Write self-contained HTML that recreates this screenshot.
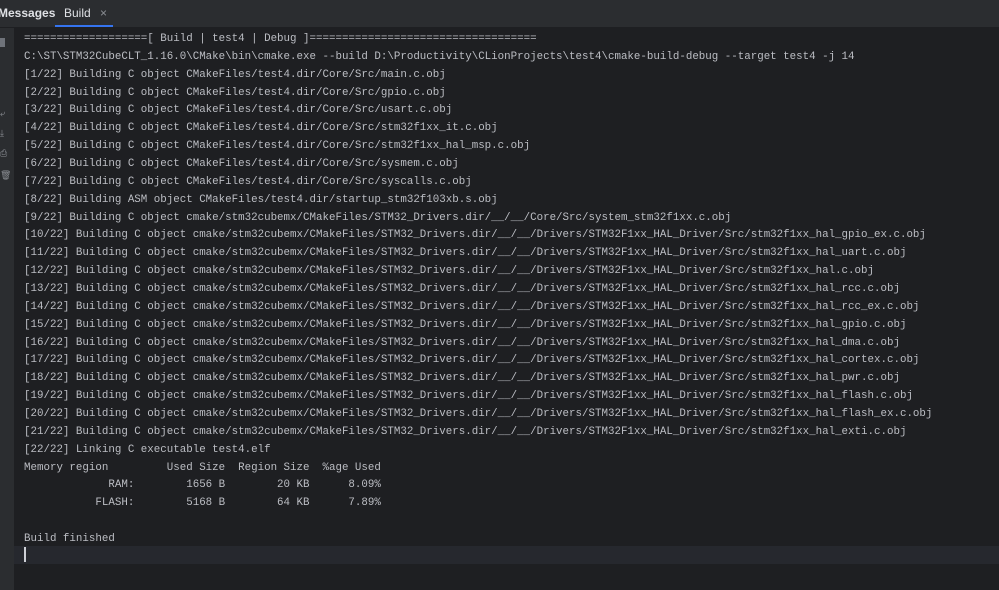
<!DOCTYPE html>
<html><head><meta charset="utf-8"><style>
body{margin:0;width:999px;height:590px;background:#1e1f22;overflow:hidden;font-family:"Liberation Sans",sans-serif;position:relative}
.hdr{position:absolute;left:0;top:0;width:999px;height:27px;background:#2b2d30;border-bottom:1px solid #1e1f22}
.tab{position:absolute;top:6px;font-size:12px;color:#dfe1e5}
.ul{position:absolute;left:55px;top:25px;width:58px;height:2px;background:#3574f0}
.gut{position:absolute;left:0;top:28px;width:14px;height:562px;background:#2b2d30}
.ico{position:absolute;left:0;width:6px;color:#8c8f95;font-size:9px;line-height:10px}
pre{position:absolute;left:24px;top:31px;margin:0;font-family:"Liberation Mono",monospace;font-size:10.82px;line-height:17.86px;color:#bcbec4}
.cur{position:absolute;left:14px;top:546px;width:985px;height:18px;background:#26282e}
.caret{position:absolute;left:24px;top:547px;width:2px;height:15px;background:#ced0d6}
</style></head><body>
<div class="hdr"></div>
<div class="tab" style="left:-2px;font-weight:bold">Messages</div>
<div class="tab" style="left:64px">Build <span style="color:#8c8f95;margin-left:6px">×</span></div>
<div class="ul"></div>
<div class="gut"></div>
<div class="ico" style="top:38px;width:5px;height:9px;background:#6f737a"></div>
<div class="ico" style="top:108px">⤶</div>
<div class="ico" style="top:128px">⤓</div>
<div class="ico" style="top:148px">⎙</div>
<div class="ico" style="top:170px">🗑</div>
<div class="cur"></div>
<div class="caret"></div>
<pre>===================[ Build | test4 | Debug ]===================================
C:\ST\STM32CubeCLT_1.16.0\CMake\bin\cmake.exe --build D:\Productivity\CLionProjects\test4\cmake-build-debug --target test4 -j 14
[1/22] Building C object CMakeFiles/test4.dir/Core/Src/main.c.obj
[2/22] Building C object CMakeFiles/test4.dir/Core/Src/gpio.c.obj
[3/22] Building C object CMakeFiles/test4.dir/Core/Src/usart.c.obj
[4/22] Building C object CMakeFiles/test4.dir/Core/Src/stm32f1xx_it.c.obj
[5/22] Building C object CMakeFiles/test4.dir/Core/Src/stm32f1xx_hal_msp.c.obj
[6/22] Building C object CMakeFiles/test4.dir/Core/Src/sysmem.c.obj
[7/22] Building C object CMakeFiles/test4.dir/Core/Src/syscalls.c.obj
[8/22] Building ASM object CMakeFiles/test4.dir/startup_stm32f103xb.s.obj
[9/22] Building C object cmake/stm32cubemx/CMakeFiles/STM32_Drivers.dir/__/__/Core/Src/system_stm32f1xx.c.obj
[10/22] Building C object cmake/stm32cubemx/CMakeFiles/STM32_Drivers.dir/__/__/Drivers/STM32F1xx_HAL_Driver/Src/stm32f1xx_hal_gpio_ex.c.obj
[11/22] Building C object cmake/stm32cubemx/CMakeFiles/STM32_Drivers.dir/__/__/Drivers/STM32F1xx_HAL_Driver/Src/stm32f1xx_hal_uart.c.obj
[12/22] Building C object cmake/stm32cubemx/CMakeFiles/STM32_Drivers.dir/__/__/Drivers/STM32F1xx_HAL_Driver/Src/stm32f1xx_hal.c.obj
[13/22] Building C object cmake/stm32cubemx/CMakeFiles/STM32_Drivers.dir/__/__/Drivers/STM32F1xx_HAL_Driver/Src/stm32f1xx_hal_rcc.c.obj
[14/22] Building C object cmake/stm32cubemx/CMakeFiles/STM32_Drivers.dir/__/__/Drivers/STM32F1xx_HAL_Driver/Src/stm32f1xx_hal_rcc_ex.c.obj
[15/22] Building C object cmake/stm32cubemx/CMakeFiles/STM32_Drivers.dir/__/__/Drivers/STM32F1xx_HAL_Driver/Src/stm32f1xx_hal_gpio.c.obj
[16/22] Building C object cmake/stm32cubemx/CMakeFiles/STM32_Drivers.dir/__/__/Drivers/STM32F1xx_HAL_Driver/Src/stm32f1xx_hal_dma.c.obj
[17/22] Building C object cmake/stm32cubemx/CMakeFiles/STM32_Drivers.dir/__/__/Drivers/STM32F1xx_HAL_Driver/Src/stm32f1xx_hal_cortex.c.obj
[18/22] Building C object cmake/stm32cubemx/CMakeFiles/STM32_Drivers.dir/__/__/Drivers/STM32F1xx_HAL_Driver/Src/stm32f1xx_hal_pwr.c.obj
[19/22] Building C object cmake/stm32cubemx/CMakeFiles/STM32_Drivers.dir/__/__/Drivers/STM32F1xx_HAL_Driver/Src/stm32f1xx_hal_flash.c.obj
[20/22] Building C object cmake/stm32cubemx/CMakeFiles/STM32_Drivers.dir/__/__/Drivers/STM32F1xx_HAL_Driver/Src/stm32f1xx_hal_flash_ex.c.obj
[21/22] Building C object cmake/stm32cubemx/CMakeFiles/STM32_Drivers.dir/__/__/Drivers/STM32F1xx_HAL_Driver/Src/stm32f1xx_hal_exti.c.obj
[22/22] Linking C executable test4.elf
Memory region         Used Size  Region Size  %age Used
             RAM:        1656 B        20 KB      8.09%
           FLASH:        5168 B        64 KB      7.89%

Build finished</pre>
</body></html>
